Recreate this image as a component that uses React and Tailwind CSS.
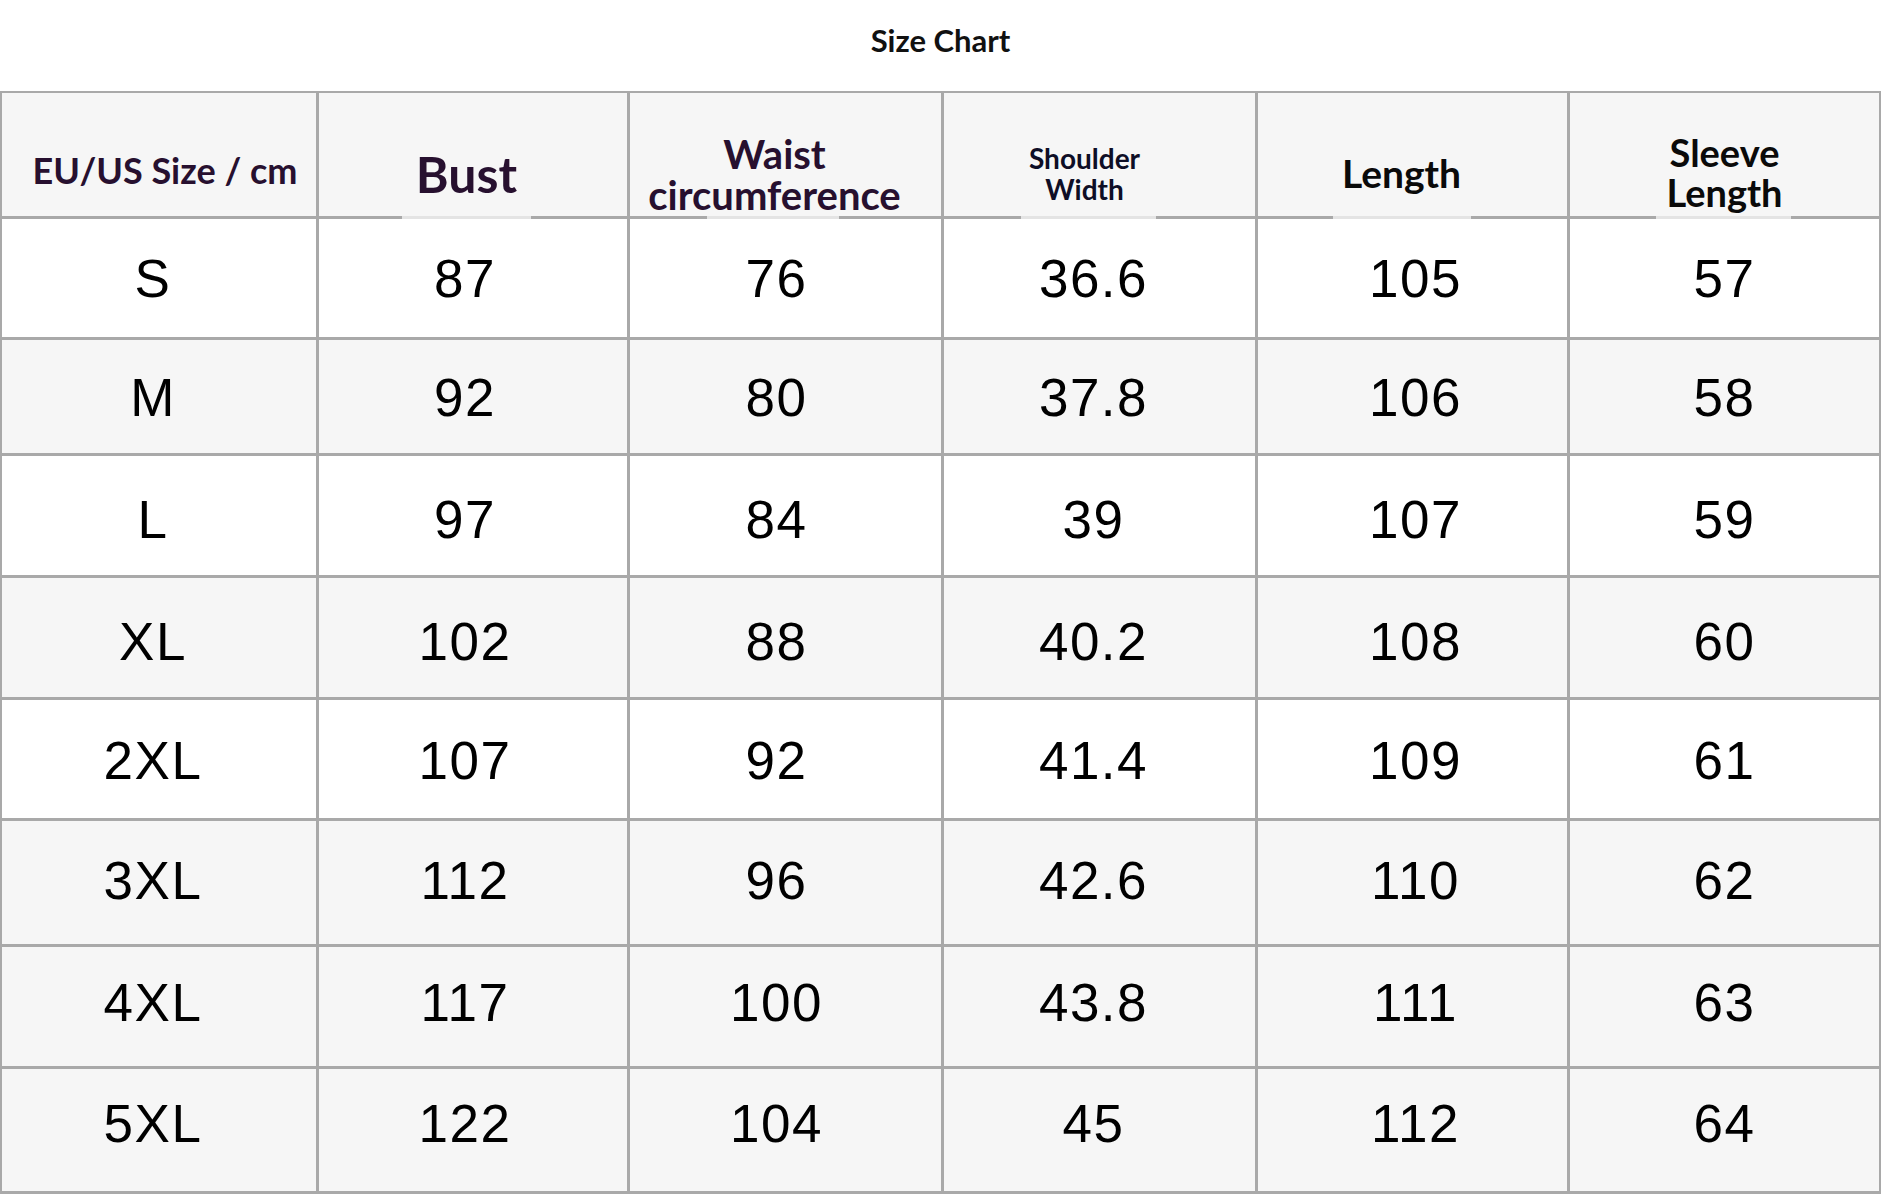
const rows = [
  { cells: ['S', '87', '76', '36.6', '105', '57'], bg: 'bg-white', nudge: '' },
  { cells: ['M', '92', '80', '37.8', '106', '58'], bg: 'bg-[#f6f6f6]', nudge: 'pt-[2px]' },
  { cells: ['L', '97', '84', '39', '107', '59'], bg: 'bg-white', nudge: 'pt-[7px]' },
  { cells: ['XL', '102', '88', '40.2', '108', '60'], bg: 'bg-[#f6f6f6]', nudge: 'pt-[8px]' },
  { cells: ['2XL', '107', '92', '41.4', '109', '61'], bg: 'bg-white', nudge: 'pt-[2px]' },
  { cells: ['3XL', '112', '96', '42.6', '110', '62'], bg: 'bg-[#f6f6f6]', nudge: 'pb-[4px]' },
  { cells: ['4XL', '117', '100', '43.8', '111', '63'], bg: 'bg-[#f6f6f6]', nudge: 'pb-[8px]' },
  { cells: ['5XL', '122', '104', '45', '112', '64'], bg: 'bg-[#f6f6f6]', nudge: 'pb-[13px]' },
]

// small nudges so values sit where they do in the chart
const colShift = ['pr-[12px]', 'pr-[16px]', 'pr-[18px]', 'pr-[12px]', 'pl-[6px]', '']

const lato = "font-['Lato','Noto_Sans',sans-serif] font-bold"

function HeadCell({ children, className, bar }) {
  return (
    <div className={`relative bg-[#f6f6f6] flex flex-col items-center justify-center text-center ${className}`}>
      {children}
      {bar && <div className={`absolute bottom-[-3px] h-[3px] bg-[#e4e4e4] ${bar}`} />}
    </div>
  )
}

export default function App() {
  return (
    <div className="w-[1881px] h-[1194px] bg-white overflow-hidden">
      <div className={`h-[91px] pt-[25px] text-center text-[31px] leading-none text-[#111] ${lato}`}>
        Size Chart
      </div>

      <div className="grid grid-cols-[314px_308px_311px_311px_309px_309px] grid-rows-[123px_118px_113px_119px_119px_118px_123px_119px_122px] gap-[3px] bg-[#a9a9a9] pl-[2px] pr-[3px] pt-[2px] pb-[3px]">
        <HeadCell className={`pt-[31px] pl-[12px] text-[36px] leading-none text-[#27102f] ${lato}`}>
          EU/US Size / cm
        </HeadCell>
        <HeadCell className={`pt-[39px] pr-[13px] text-[50px] leading-none text-[#27102f] ${lato}`} bar="left-[83px] w-[129px]">
          Bust
        </HeadCell>
        <HeadCell className={`pt-[40px] pr-[22px] text-[40px] leading-[41px] text-[#27102f] ${lato}`} bar="left-[77px] w-[132px]">
          <span>Waist</span>
          <span>circumference</span>
        </HeadCell>
        <HeadCell className={`pt-[39px] pr-[30px] text-[28px] leading-[31px] text-[#0e0e26] ${lato}`} bar="left-[77px] w-[135px]">
          <span>Shoulder</span>
          <span>Width</span>
        </HeadCell>
        <HeadCell className={`pt-[38px] pr-[22px] text-[39px] leading-none text-[#0a0a0a] ${lato}`} bar="left-[75px] w-[138px]">
          Length
        </HeadCell>
        <HeadCell className={`pt-[35px] text-[38px] leading-[40px] text-[#0a0a0a] ${lato}`} bar="left-[86px] w-[135px]">
          <span>Sleeve</span>
          <span>Length</span>
        </HeadCell>

        {rows.map((row, r) =>
          row.cells.map((v, c) => (
            <div
              key={`${r}-${c}`}
              className={`${row.bg} ${colShift[c]} ${row.nudge} flex items-center justify-center font-['Liberation_Sans',Arial,sans-serif] text-[53px] leading-none tracking-[1.5px] text-black`}
            >
              {v}
            </div>
          ))
        )}
      </div>
    </div>
  )
}
